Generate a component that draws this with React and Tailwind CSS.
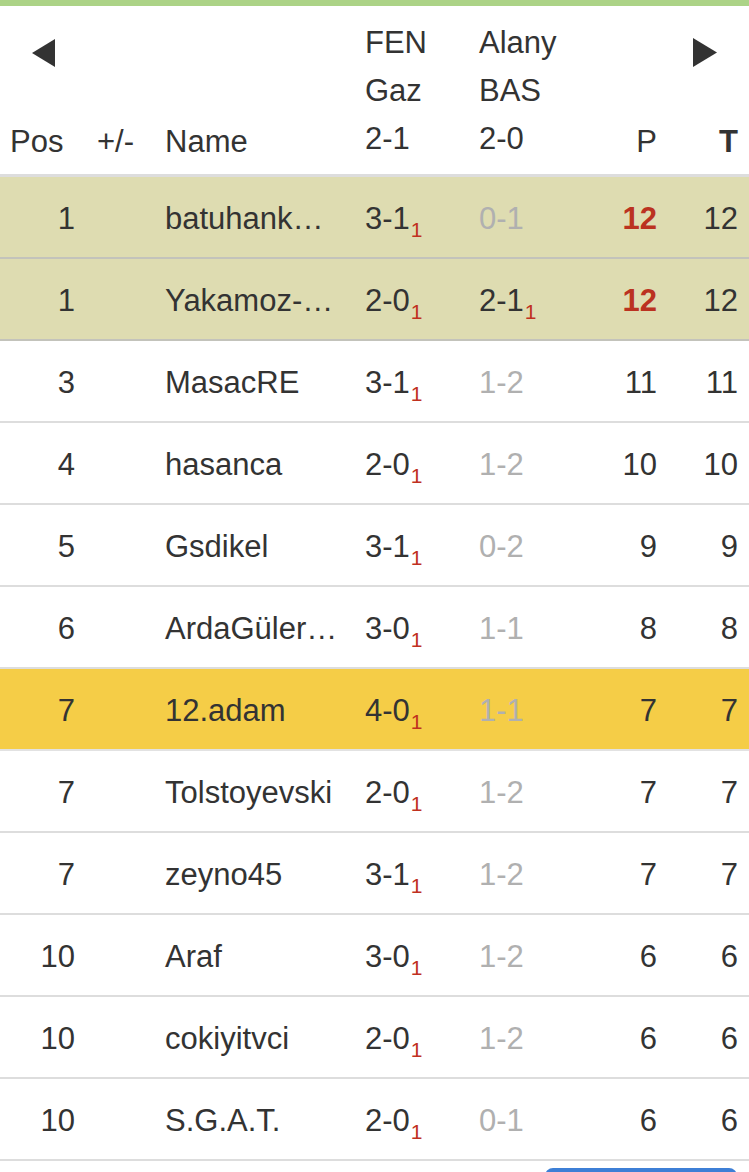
import React from "react";

const rows = [
  { pos: "1", name: "batuhank…", s1: "3-1", s1sub: true, s2: "0-1", s2sub: false, s2gray: true, p: "12", pRed: true, t: "12", bg: "khaki" },
  { pos: "1", name: "Yakamoz-…", s1: "2-0", s1sub: true, s2: "2-1", s2sub: true, s2gray: false, p: "12", pRed: true, t: "12", bg: "khaki" },
  { pos: "3", name: "MasacRE", s1: "3-1", s1sub: true, s2: "1-2", s2gray: true, p: "11", t: "11" },
  { pos: "4", name: "hasanca", s1: "2-0", s1sub: true, s2: "1-2", s2gray: true, p: "10", t: "10" },
  { pos: "5", name: "Gsdikel", s1: "3-1", s1sub: true, s2: "0-2", s2gray: true, p: "9", t: "9" },
  { pos: "6", name: "ArdaGüler…", s1: "3-0", s1sub: true, s2: "1-1", s2gray: true, p: "8", t: "8" },
  { pos: "7", name: "12.adam", s1: "4-0", s1sub: true, s2: "1-1", s2gray: true, p: "7", t: "7", bg: "yellow" },
  { pos: "7", name: "Tolstoyevski", s1: "2-0", s1sub: true, s2: "1-2", s2gray: true, p: "7", t: "7" },
  { pos: "7", name: "zeyno45", s1: "3-1", s1sub: true, s2: "1-2", s2gray: true, p: "7", t: "7" },
  { pos: "10", name: "Araf", s1: "3-0", s1sub: true, s2: "1-2", s2gray: true, p: "6", t: "6" },
  { pos: "10", name: "cokiyitvci", s1: "2-0", s1sub: true, s2: "1-2", s2gray: true, p: "6", t: "6" },
  { pos: "10", name: "S.G.A.T.", s1: "2-0", s1sub: true, s2: "0-1", s2gray: true, p: "6", t: "6" },
];

function Sub() {
  return <span className="relative top-[8px] text-[21px] leading-none text-[#c0311f] ml-[1px]">1</span>;
}

function Row({ r }) {
  const bgClass =
    r.bg === "khaki"
      ? "bg-[#dedcb1] border-[#c3c3bb]"
      : r.bg === "yellow"
      ? "bg-[#f5cd47] border-[#e2e2e2]"
      : "bg-white border-[#dddddd]";
  return (
    <div className={`flex items-center h-[82px] pt-[3px] border-b-2 ${bgClass}`}>
      <div className="w-[85px] text-right pr-[10px]">{r.pos}</div>
      <div className="w-[70px]"></div>
      <div className="w-[200px] pl-[10px] whitespace-nowrap overflow-hidden">{r.name}</div>
      <div className="w-[114px] pl-[10px] whitespace-nowrap">
        {r.s1}
        {r.s1sub && <Sub />}
      </div>
      <div className={`w-[106px] pl-[10px] whitespace-nowrap ${r.s2gray ? "text-[#b0b0b0]" : ""}`}>
        {r.s2}
        {r.s2sub && <Sub />}
      </div>
      <div className={`w-[92px] text-right pr-[10px] ${r.pRed ? "font-bold text-[#bb3220]" : ""}`}>{r.p}</div>
      <div className="w-[82px] text-right pr-[11px]">{r.t}</div>
    </div>
  );
}

export default function App() {
  return (
    <div
      className="w-[749px] h-[1172px] overflow-hidden bg-white text-[#333333] text-[31px] leading-[48px]"
      style={{ fontFamily: '"Liberation Sans", Arial, Helvetica, sans-serif' }}
    >
      <div className="h-[6px] bg-[#acd387]"></div>
      <div className="flex h-[171px] border-b-[3px] border-[#dddddd]">
        <div className="w-[85px] flex flex-col justify-between">
          <svg className="mt-[33px] ml-[32px]" width="23" height="28" viewBox="0 0 23 28">
            <polygon points="23,0 23,28 0,14" fill="#333333" />
          </svg>
          <div className="pl-[10px] pb-[8px]">Pos</div>
        </div>
        <div className="w-[70px] flex flex-col justify-end">
          <div className="pl-[12px] pb-[8px]">+/-</div>
        </div>
        <div className="w-[200px] flex flex-col justify-end">
          <div className="pl-[10px] pb-[8px]">Name</div>
        </div>
        <div className="w-[114px] flex flex-col justify-end pl-[10px] pb-[11px]">
          <div>FEN</div>
          <div>Gaz</div>
          <div>2-1</div>
        </div>
        <div className="w-[106px] flex flex-col justify-end pl-[10px] pb-[11px]">
          <div>Alany</div>
          <div>BAS</div>
          <div>2-0</div>
        </div>
        <div className="w-[92px] flex flex-col justify-end">
          <div className="text-right pr-[10px] pb-[8px]">P</div>
        </div>
        <div className="w-[82px] flex flex-col justify-between">
          <svg className="mt-[32px] ml-[26px]" width="24" height="29" viewBox="0 0 24 29">
            <polygon points="0,0 24,14.5 0,29" fill="#333333" />
          </svg>
          <div className="text-right pr-[11px] pb-[8px] font-bold">T</div>
        </div>
      </div>
      {rows.map((r, i) => (
        <Row key={i} r={r} />
      ))}
      <div className="flex justify-end pr-[12px] mt-[7px]">
        <div className="w-[192px] h-[40px] rounded-[8px] bg-[#3d7fd6]"></div>
      </div>
    </div>
  );
}
